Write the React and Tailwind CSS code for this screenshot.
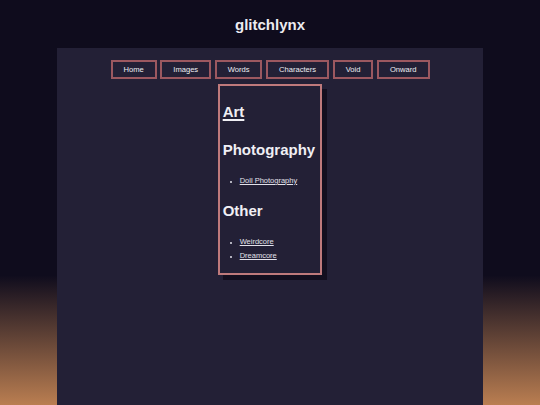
const navItems = ["Home", "Images", "Words", "Characters", "Void", "Onward"];

const App = () => {
    return (
        <div
            className="h-[405px] w-full overflow-hidden bg-[linear-gradient(to_bottom,#0f0c1d_68%,#ba7e51_100%)]"
            style={{ fontFamily: '"Liberation Sans", Arial, sans-serif' }}
        >
            {/* Site title */}
            <header className="flex h-[48px] items-center justify-center">
                <h1 className="text-[15px] font-bold leading-none text-[#ecebf0]">glitchlynx</h1>
            </header>

            {/* Main panel */}
            <main className="mx-auto h-[357px] w-[426px] bg-[#232036] pt-[12px]">
                <nav className="flex justify-center gap-[3.5px]">
                    {navItems.map((item) => (
                        <div key={item} className="relative">
                            <a className="flex h-[19px] items-center border-2 border-[#9c5860] px-[11px] text-[7.6px] leading-none text-[#eeeef2]">
                                {item}
                            </a>

                            {item === "Words" && (
                                <div className="absolute left-[3px] top-[24px] z-10 h-[191px] w-[104px] border-2 border-[#bf7a7c] bg-[#232036] px-[3px] pt-[17px] shadow-[5px_5px_0_#130f1f]">
                                    <a className="block text-[15px] font-bold leading-[17px] text-[#f0eff4] underline decoration-[1.5px] underline-offset-2">
                                        Art
                                    </a>
                                    <h2 className="mt-[21px] text-[15px] font-bold leading-[17px] text-[#f0eff4]">
                                        Photography
                                    </h2>
                                    <ul className="mt-[18px] list-disc pl-[17px] text-[7.5px] leading-[10px] text-[#e2e1ea] marker:text-[6px]">
                                        <li><a className="underline">Doll Photography</a></li>
                                    </ul>
                                    <h2 className="mt-[16px] text-[15px] font-bold leading-[17px] text-[#f0eff4]">
                                        Other
                                    </h2>
                                    <ul className="mt-[18px] list-disc space-y-[4px] pl-[17px] text-[7.5px] leading-[10px] text-[#e2e1ea] marker:text-[6px]">
                                        <li><a className="underline">Weirdcore</a></li>
                                        <li><a className="underline">Dreamcore</a></li>
                                    </ul>
                                </div>
                            )}
                        </div>
                    ))}
                </nav>
            </main>
        </div>
    );
};

export default App;
